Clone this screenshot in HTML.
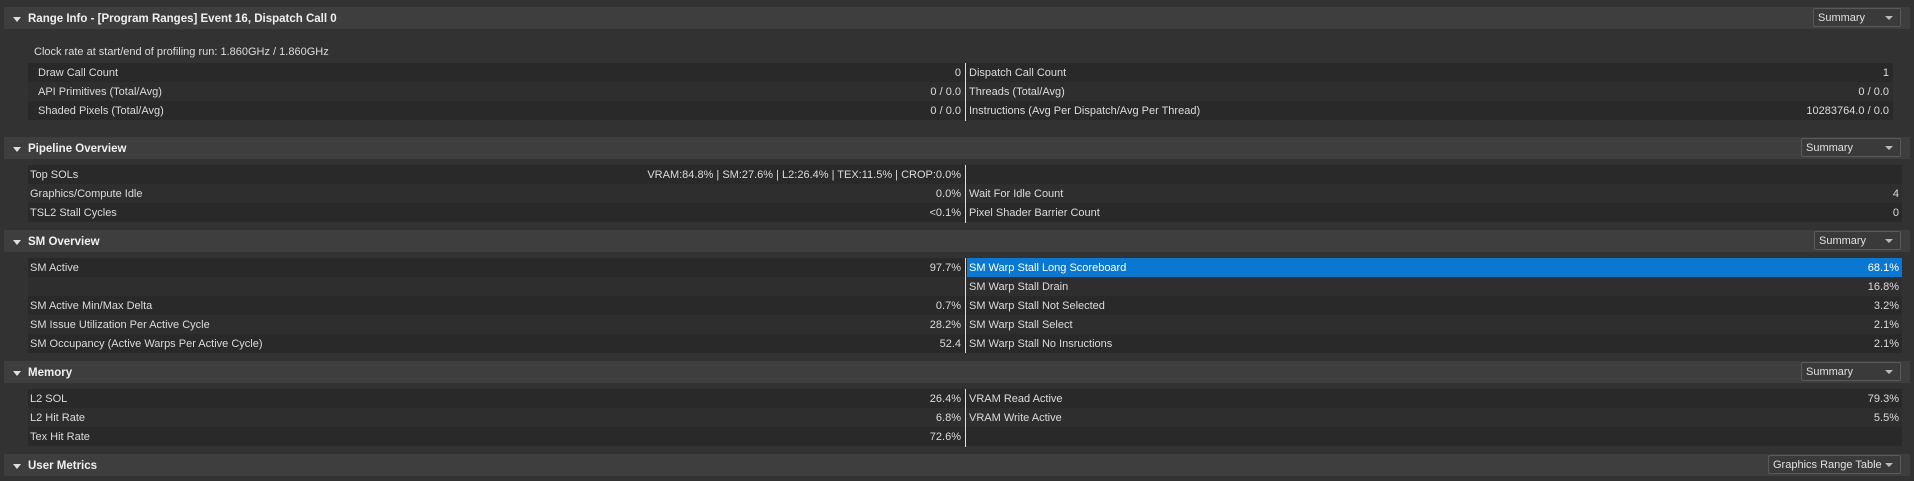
<!DOCTYPE html>
<html><head><meta charset="utf-8"><style>
html,body{margin:0;padding:0;}
body{width:1914px;height:481px;background:#323232;position:relative;overflow:hidden;font-family:"Liberation Sans","DejaVu Sans",sans-serif;font-size:11px;color:#dcdcdc;}
.h{position:absolute;left:4px;width:1906px;height:22px;background:#3e3e3e;}
.h .t{position:absolute;left:24px;top:6px;font-weight:bold;color:#f0f0f0;font-size:11.5px;}
.h .tri{position:absolute;left:9px;top:10px;width:0;height:0;border-left:4px solid transparent;border-right:4px solid transparent;border-top:5px solid #e0e0e0;}
.dd{position:absolute;height:19px;background:#3a3a3a;border:1px solid #5a5a5a;border-radius:2px;box-sizing:border-box;}
.dd span{position:absolute;left:4px;top:3px;color:#e0e0e0;}
.dd i{position:absolute;right:7px;top:7px;width:0;height:0;border-left:4px solid transparent;border-right:4px solid transparent;border-top:4px solid #bbb;}
.r{position:absolute;left:28px;height:19px;}
.r.a{background:#292929;}.r.b{background:#2e2e2e;}
.sel{position:absolute;background:#0a78d0;height:19px;}
.div{position:absolute;left:965px;width:1px;background:#e0e0e0;}
#txt div{margin-top:1px;}
</style></head><body>

<div class="h" style="top:7px"><div class="tri"></div><div class="t">Range Info - [Program Ranges] Event 16, Dispatch Call 0</div></div>
<div class="dd" style="left:1813px;top:8px;width:88px"><span>Summary</span><i></i></div>
<div style="position:absolute;left:34px;top:46px">Clock rate at start/end of profiling run: 1.860GHz / 1.860GHz</div>

<div class="r a" style="top:63px;width:1865px"></div>
<div class="r b" style="top:82px;width:1865px"></div>
<div class="r a" style="top:101px;width:1865px"></div>
<div class="div" style="top:63px;height:58px"></div>

<div class="h" style="top:137px"><div class="tri"></div><div class="t">Pipeline Overview</div></div>
<div class="dd" style="left:1801px;top:138px;width:100px"><span>Summary</span><i></i></div>
<div class="r a" style="top:165px;width:1874px"></div>
<div class="r b" style="top:184px;width:1874px"></div>
<div class="r a" style="top:203px;width:1874px"></div>
<div class="div" style="top:165px;height:58px"></div>

<div class="h" style="top:230px"><div class="tri"></div><div class="t">SM Overview</div></div>
<div class="dd" style="left:1814px;top:231px;width:87px"><span>Summary</span><i></i></div>
<div class="r a" style="top:258px;width:1874px"></div>
<div class="r b" style="top:277px;width:1874px"></div>
<div class="r a" style="top:296px;width:1874px"></div>
<div class="r b" style="top:315px;width:1874px"></div>
<div class="r a" style="top:334px;width:1874px"></div>
<div class="sel" style="left:967px;top:258px;width:935px"></div>
<div class="div" style="top:258px;height:95px"></div>

<div class="h" style="top:361px"><div class="tri"></div><div class="t">Memory</div></div>
<div class="dd" style="left:1801px;top:362px;width:100px"><span>Summary</span><i></i></div>
<div class="r a" style="top:389px;width:1874px"></div>
<div class="r b" style="top:408px;width:1874px"></div>
<div class="r a" style="top:427px;width:1874px"></div>
<div class="div" style="top:389px;height:58px"></div>

<div class="h" style="top:454px"><div class="tri"></div><div class="t">User Metrics</div></div>
<div class="dd" style="left:1768px;top:455px;width:133px"><span>Graphics Range Table</span><i></i></div>

<div id="txt">
<div style="position:absolute;left:38px;top:66px">Draw Call Count</div>
<div style="position:absolute;right:953px;top:66px">0</div>
<div style="position:absolute;left:969px;top:66px">Dispatch Call Count</div>
<div style="position:absolute;right:25px;top:66px">1</div>
<div style="position:absolute;left:38px;top:85px">API Primitives (Total/Avg)</div>
<div style="position:absolute;right:953px;top:85px">0 / 0.0</div>
<div style="position:absolute;left:969px;top:85px">Threads (Total/Avg)</div>
<div style="position:absolute;right:25px;top:85px">0 / 0.0</div>
<div style="position:absolute;left:38px;top:104px">Shaded Pixels (Total/Avg)</div>
<div style="position:absolute;right:953px;top:104px">0 / 0.0</div>
<div style="position:absolute;left:969px;top:104px">Instructions (Avg Per Dispatch/Avg Per Thread)</div>
<div style="position:absolute;right:25px;top:104px">10283764.0 / 0.0</div>
<div style="position:absolute;left:30px;top:168px">Top SOLs</div>
<div style="position:absolute;right:953px;top:168px">VRAM:84.8% | SM:27.6% | L2:26.4% | TEX:11.5% | CROP:0.0%</div>
<div style="position:absolute;left:30px;top:187px">Graphics/Compute Idle</div>
<div style="position:absolute;right:953px;top:187px">0.0%</div>
<div style="position:absolute;left:969px;top:187px">Wait For Idle Count</div>
<div style="position:absolute;right:15px;top:187px">4</div>
<div style="position:absolute;left:30px;top:206px">TSL2 Stall Cycles</div>
<div style="position:absolute;right:953px;top:206px">&lt;0.1%</div>
<div style="position:absolute;left:969px;top:206px">Pixel Shader Barrier Count</div>
<div style="position:absolute;right:15px;top:206px">0</div>
<div style="position:absolute;left:30px;top:261px">SM Active</div>
<div style="position:absolute;right:953px;top:261px">97.7%</div>
<div style="position:absolute;left:969px;top:261px;color:#fff">SM Warp Stall Long Scoreboard</div>
<div style="position:absolute;right:15px;top:261px;color:#fff">68.1%</div>
<div style="position:absolute;left:969px;top:280px">SM Warp Stall Drain</div>
<div style="position:absolute;right:15px;top:280px">16.8%</div>
<div style="position:absolute;left:30px;top:299px">SM Active Min/Max Delta</div>
<div style="position:absolute;right:953px;top:299px">0.7%</div>
<div style="position:absolute;left:969px;top:299px">SM Warp Stall Not Selected</div>
<div style="position:absolute;right:15px;top:299px">3.2%</div>
<div style="position:absolute;left:30px;top:318px">SM Issue Utilization Per Active Cycle</div>
<div style="position:absolute;right:953px;top:318px">28.2%</div>
<div style="position:absolute;left:969px;top:318px">SM Warp Stall Select</div>
<div style="position:absolute;right:15px;top:318px">2.1%</div>
<div style="position:absolute;left:30px;top:337px">SM Occupancy (Active Warps Per Active Cycle)</div>
<div style="position:absolute;right:953px;top:337px">52.4</div>
<div style="position:absolute;left:969px;top:337px">SM Warp Stall No Insructions</div>
<div style="position:absolute;right:15px;top:337px">2.1%</div>
<div style="position:absolute;left:30px;top:392px">L2 SOL</div>
<div style="position:absolute;right:953px;top:392px">26.4%</div>
<div style="position:absolute;left:969px;top:392px">VRAM Read Active</div>
<div style="position:absolute;right:15px;top:392px">79.3%</div>
<div style="position:absolute;left:30px;top:411px">L2 Hit Rate</div>
<div style="position:absolute;right:953px;top:411px">6.8%</div>
<div style="position:absolute;left:969px;top:411px">VRAM Write Active</div>
<div style="position:absolute;right:15px;top:411px">5.5%</div>
<div style="position:absolute;left:30px;top:430px">Tex Hit Rate</div>
<div style="position:absolute;right:953px;top:430px">72.6%</div>
</div>
</body></html>
